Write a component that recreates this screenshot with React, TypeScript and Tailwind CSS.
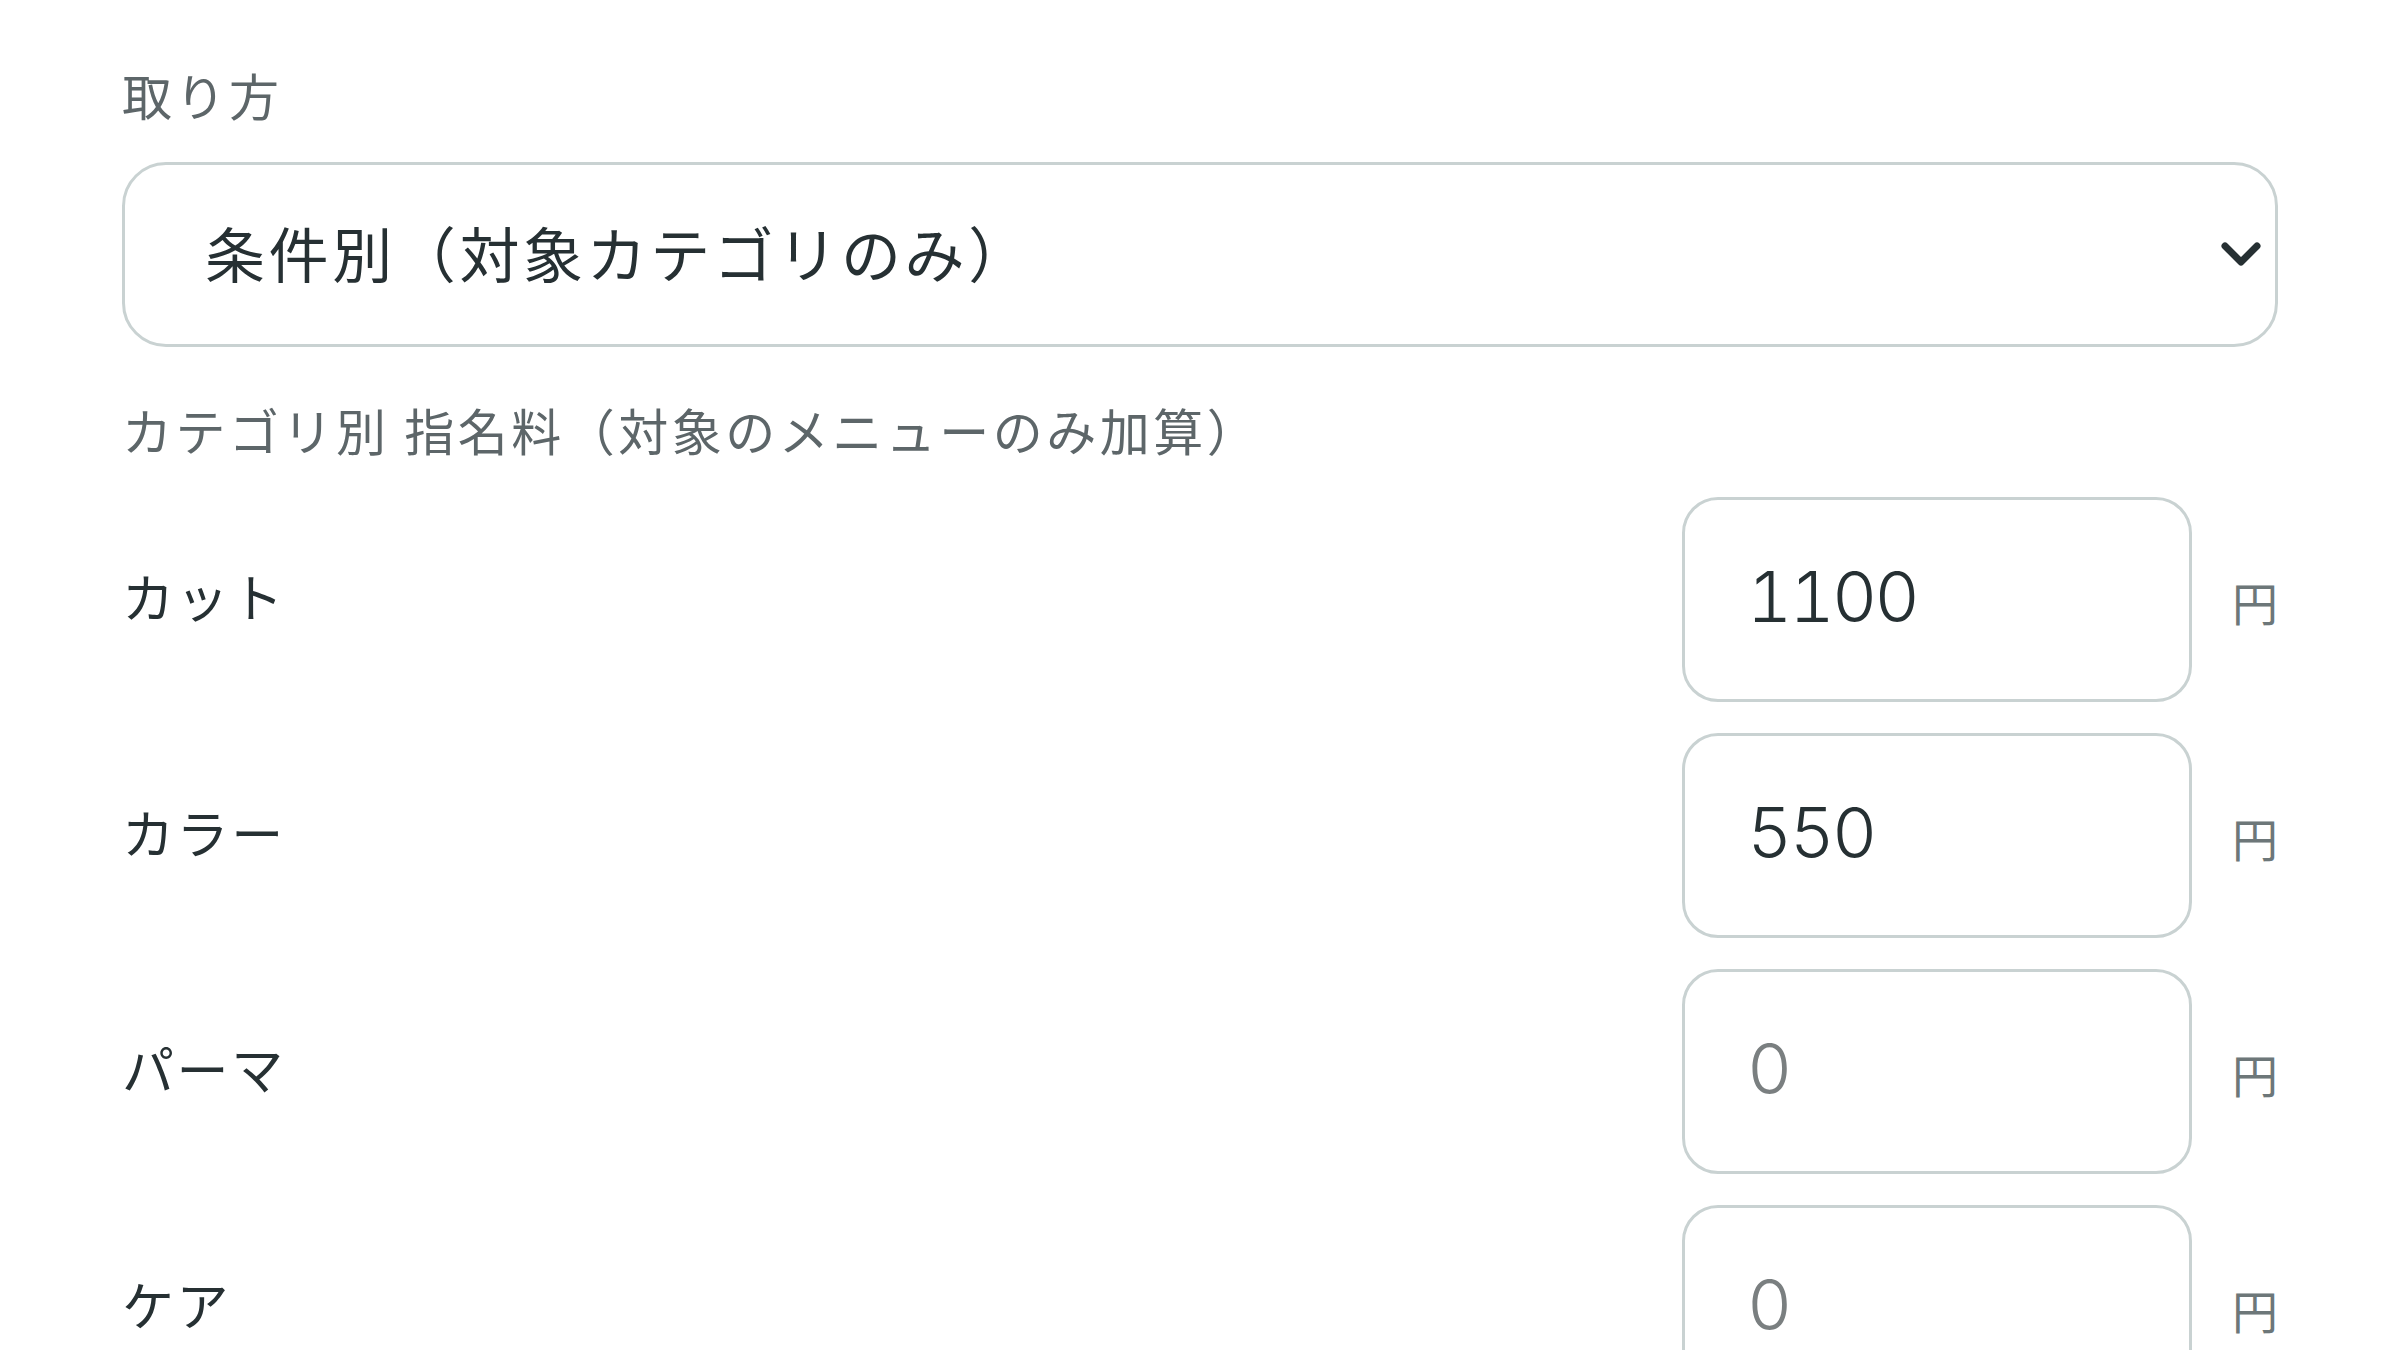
import { useState } from "react";

type FeeRow = {
  label: string;
  value: string;
};

const rows: FeeRow[] = [
  { label: "カット", value: "1100" },
  { label: "カラー", value: "550" },
  { label: "パーマ", value: "" },
  { label: "ケア", value: "" },
];

const jp = "font-['Noto_Sans_CJK_JP','Noto_Sans',sans-serif]";

export default function App() {
  const [values, setValues] = useState(rows.map((r) => r.value));

  return (
    <div
      className={`${jp} h-[1350px] w-full overflow-hidden bg-white px-[122px] pt-[57px] text-[#263033]`}
    >
      <div className="text-[50px] leading-[75px] tracking-[0.07em] text-[#5d6669]">
        取り方
      </div>

      <button
        type="button"
        className="mt-[30px] flex h-[185px] w-full items-center justify-between rounded-[44px] border-[3px] border-[#c9d2d2] bg-white pl-[80px] pr-[12px] text-left"
      >
        <span className="pb-[5px] text-[60px] leading-none tracking-[0.06em] text-[#263033]">
          条件別（対象カテゴリのみ）
        </span>
        <svg
          width="44"
          height="32"
          viewBox="0 0 44 32"
          fill="none"
          stroke="#263033"
          strokeWidth="7"
          strokeLinecap="round"
          strokeLinejoin="round"
        >
          <polyline points="6,7 22,23 38,7" />
        </svg>
      </button>

      <div className="mt-[45px] text-[50px] leading-[75px] tracking-[0.07em] text-[#5d6669]">
        カテゴリ別 指名料（対象のメニューのみ加算）
      </div>

      <div className="mt-[30px] flex flex-col gap-[31px]">
        {rows.map((row, i) => (
          <div key={row.label} className="flex items-center">
            <div className="flex-1 pb-[8px] text-[52px] leading-none tracking-[0.05em] text-[#263033]">
              {row.label}
            </div>
            <input
              type="text"
              inputMode="numeric"
              value={values[i]}
              placeholder="0"
              onChange={(e) =>
                setValues((v) => v.map((x, j) => (j === i ? e.target.value : x)))
              }
              className="h-[205px] w-[510px] rounded-[36px] border-[3px] border-[#c9d2d2] bg-white pb-[6px] pl-[62px] font-['Inter','Noto_Sans',sans-serif] text-[70px] font-light tabular-nums tracking-[-0.04em] text-[#263033] outline-none placeholder:text-[#7a7f80]"
            />
            <div className="ml-[40px] pt-[2px] text-[46px] leading-none text-[#6d7779]">
              円
            </div>
          </div>
        ))}
      </div>
    </div>
  );
}
